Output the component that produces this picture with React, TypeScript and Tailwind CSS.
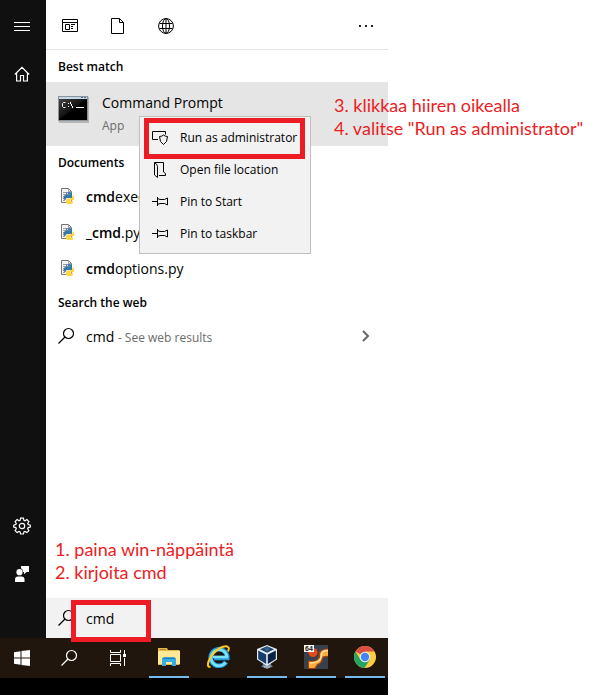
import type { ReactNode } from "react";

const documents = [
  { match: "cmd", after: "exec.py" },
  { match: "_cmd", after: ".py" },
  { match: "cmd", after: "options.py" },
];

const SearchIcon = ({ className = "" }: { className?: string }) => (
  <svg width="18" height="18" viewBox="0 0 18 18" fill="none" stroke="currentColor" className={className}>
    <circle cx="10.5" cy="6.5" r="5" strokeWidth="1.2" />
    <path d="M7 10 .5 16.500" strokeWidth="1.2" />
  </svg>
);

const HomeIcon = () => (
  <svg width="16" height="16" viewBox="0 0 16 16" fill="none" stroke="currentColor" strokeWidth="1.2">
    <path d="M.8 8.500 8 1.400l7.200 7.100M2.600 7v8h3.900V9.500h3v5.500h3.900V7" />
  </svg>
);

const GearIcon = () => (
  <svg width="18" height="18" viewBox="0 0 18 18" fill="none" stroke="currentColor" strokeWidth="1.2">
    <path d="M7.6 1.2h2.8l.5 2.1 1.1.5 1.9-1.2 2 2-1.2 1.9.5 1.1 2.1.5v2l-2.1.5-.5 1.2 1.2 1.8-2 2-1.9-1.2-1.1.5-.5 2.1H7.6l-.5-2.1-1.1-.5-1.9 1.2-2-2 1.2-1.8-.5-1.2L.7 10V8.1l2.1-.5.5-1.1-1.2-1.9 2-2L6 3.8l1.1-.5z" />
    <circle cx="9" cy="9" r="2.7" />
  </svg>
);

const FeedbackIcon = () => (
  <svg width="16" height="18" viewBox="0 0 16 18" fill="currentColor">
    <path d="M7 1h8v6h-2.5L10 9.2V7H9a4 4 0 0 0-2-3.7z" />
    <circle cx="5.5" cy="7.2" r="3.1" />
    <path d="M1 17v-2.5a3 3 0 0 1 3-3h3.5a3 3 0 0 1 3 3V17z" />
  </svg>
);

const AppsIcon = () => (
  <svg width="16" height="16" viewBox="0 0 16 16" fill="none" stroke="currentColor">
    <path d="M.5 1.500h15v12H.5zM.5 4.500h15M3.500 6.500h4v5h-4zM9 6.500h4M9 8.500h2M9 10.500h2" />
  </svg>
);

const FileIcon = () => (
  <svg width="16" height="16" viewBox="0 0 16 16" fill="none" stroke="currentColor">
    <path d="M1.500.5h8l4 4v11h-12zM9.500.5v4h4" />
  </svg>
);

const GlobeIcon = () => (
  <svg width="16" height="16" viewBox="0 0 16 16" fill="none" stroke="currentColor">
    <circle cx="8" cy="8" r="7.400" />
    <ellipse cx="8" cy="8" rx="3.500" ry="7.400" />
    <path d="M8 .5v15M1.500 5.500h13M1.500 10.500h13" />
  </svg>
);

const CmdIcon = () => (
  <svg width="32" height="28" viewBox="0 0 32 28">
    <defs>
      <linearGradient id="screen" x1="0" y1="0" x2="1" y2="1">
        <stop offset="0" stopColor="#444" />
        <stop offset=".48" stopColor="#111" />
        <stop offset=".5" stopColor="#000" />
      </linearGradient>
    </defs>
    <path d="M1 1h30v26H1z" fill="#b5b5b5" />
    <path d="M0 0h30v25H0z" fill="#8b949b" />
    <path d="M1 1h28v2H1z" fill="#c5d8e8" />
    <path d="M23 1h2v1h-2zM26 1h2v1h-2z" fill="#527292" />
    <path d="M1 3h28v21H1z" fill="url(#screen)" />
    <path
      d="M7.500 6.500h-2l-1 1v3l1 1h2M10.500 7v1M10.500 10v1M12.500 6v2M13.500 8v2M14.500 10v2M18 11.500h8"
      fill="none"
      stroke="#fff"
    />
  </svg>
);

const PythonFileIcon = () => (
  <svg width="14" height="16" viewBox="0 0 14 16" className="shrink-0">
    <path d="M.5.5h7l3 3v11H.5z" fill="#f5f5f5" stroke="#777" />
    <path d="M7.500.5v3h3M2 4.500h4M2 6.500h6M2 8.500h3M2 10.500h2M2 12.500h2" fill="none" stroke="#999" />
    <path d="M5 5.500Q5 4 8 4t3 1.500V8q0 2-2 2H6q-1.500 0-1.500 2H4q-1.500 0-1.500-2.500T4.500 7h4v-.6H5z" fill="#3776ab" />
    <path d="M11.500 7q1.800.3 1.800 3T11 12.500H9v.7h3v1.300Q12 16 8.500 16T5 14.500V12.500q0-2 2-2h2.500q2 0 2-2z" fill="#ffd544" />
    <circle cx="6.500" cy="5.500" r=".5" fill="#fff" />
  </svg>
);

const ShieldIcon = () => (
  <svg width="16" height="16" viewBox="0 0 16 16" fill="none" stroke="currentColor">
    <path d="M13.500 4.500v-3H.5v8h5.500M11.500 5q1.500 1.500 4 1.500 0 6-4 8-4-2-4-8 2.500 0 4-1.500z" />
  </svg>
);

const FolderIcon = () => (
  <svg width="16" height="16" viewBox="0 0 16 16" fill="none" stroke="currentColor">
    <path d="M2.500.5h9v9.500l2 1.500v2H7M2.500.5v12.500l3 2.500V4.500q0-2-3-4" />
  </svg>
);

const PinIcon = () => (
  <svg width="16" height="16" viewBox="0 0 16 16" fill="none" stroke="currentColor">
    <path d="M0 7.500h5.500M5.500 3v9M5.500 4.500 8 5.500h4.500l3-1.500v7l-3-1.500H8l-2.500 1" />
  </svg>
);

const WindowsIcon = () => (
  <svg width="16" height="16" viewBox="0 0 16 16" fill="#fff">
    <path d="M0 2.200 6.500 1.300V7.500H0zM7.500 1.100 16 0v7.500H7.500zM0 8.500h6.500v6.200L0 13.800zM7.500 8.500H16V16l-8.500-1.100z" />
  </svg>
);

const TaskViewIcon = () => (
  <svg width="18" height="16" viewBox="0 0 18 16" fill="none" stroke="#fff">
    <path d="M1.500 0v2.500h10V0M1.500 4.500h10v7h-10zM1.500 16v-2.500h10V16M15.500 0v4M15.500 8v8" />
    <path d="M14 4h3v3h-3z" fill="#fff" stroke="none" />
  </svg>
);

const ExplorerIcon = () => (
  <svg width="22" height="20" viewBox="0 0 22 20">
    <path d="M0 1h9l1 2h11.500v15H0z" fill="#e5b94e" />
    <path d="M2 2h6v1H2z" fill="#b58a32" />
    <path d="M0 4h22v13H0z" fill="#ffe896" />
    <path d="M4 19v-7l1.500-1.500h11L18 12v7h-4v-4H8v4z" fill="#35aee8" />
    <path d="M5.500 10.500h11L18 12H4z" fill="#1979c9" />
  </svg>
);

const InternetExplorerIcon = () => (
  <svg width="24" height="24" viewBox="0 0 24 24" fill="none">
    <path d="M20 17a8.300 8.300 0 1 1 1.300-4H8" stroke="#209ce0" strokeWidth="4.600" />
    <path d="M19.500 17.500a8 8 0 1 1 1.500-5.500H7" stroke="#7ce2fc" strokeWidth="2.600" />
    <path d="M4.500 21.500C1 23 1 18 5 11.500 10 4 18.500-.5 22 2c1.500 1 .7 3 0 4.500" stroke="#ffc91f" strokeWidth="2" />
  </svg>
);

const VirtualBoxIcon = () => (
  <svg width="20" height="24" viewBox="0 0 20 24">
    <path d="M6 17h8v3l2 1.500L10 24l-6-2.500L6 20z" fill="#76879b" />
    <path d="M10 0 20 4v10.500L10 21 0 14.500V4z" fill="#e5edf4" />
    <path d="m10 1.200 7 3-7 3.600-7-3.600z" fill="#1d3e67" />
    <path d="M1.200 5.500 9.200 9.500v9.500L1.200 14z" fill="#173c6d" />
    <path d="M18.800 5.500 10.800 9.500v9.500l8-5z" fill="#0b2345" />
    <path d="m10 1.500 3 2.500-3 2.500L7 4z" fill="#3b6290" />
    <path d="M7 22h6" stroke="#c6d0db" />
  </svg>
);

const SixtyFourIcon = () => (
  <svg width="24" height="24" viewBox="0 0 24 24">
    <path d="M0 0h24v24H0z" fill="#38404b" />
    <circle cx="9" cy="7.500" r="4.500" fill="#e84a16" />
    <path d="M24 3.500v8.500q-5-.5-5.500 3T14 20l-2.500 4H4v-8.500q6 1 8.500-1t2-6Q16 3.500 24 3.500z" fill="#9b430f" />
    <path d="M24 4.500v6.500q-6-1-6.500 3T13 19l-2.500 4H5v-6.500q6 1 9-1.500t2-6Q17 4.500 24 4.500z" fill="#ffad42" />
    <path d="M24 5.500q-6 0-6.500 3.500 0 5-3 7T6 18" fill="none" stroke="#ffe3a6" strokeWidth="1.500" />
    <path d="M0 0h10v7H0z" fill="#fff" />
    <text x="1" y="6" fontSize="7" fontWeight="700" fontFamily="Liberation Sans, sans-serif" fill="#111">
      64
    </text>
  </svg>
);

const ChromeIcon = () => (
  <svg width="22" height="22" viewBox="0 0 22 22">
    <circle cx="11" cy="11" r="11" fill="#ffcd42" />
    <path d="M11 11 1.500 5.500A11 11 0 0 1 20.500 5.500H11z" fill="#d94f43" />
    <path d="M1.500 5.500a11 11 0 0 0 9 16.500L16 13.500 11 11 6.300 13.500z" fill="#24a363" />
    <circle cx="11" cy="11" r="5.200" fill="#f4f4f4" />
    <circle cx="11" cy="11" r="4.200" fill="#4285f4" />
  </svg>
);

const menuItems = [
  { label: "Run as administrator", icon: <ShieldIcon /> },
  { label: "Open file location", icon: <FolderIcon /> },
  { label: "Pin to Start", icon: <PinIcon /> },
  { label: "Pin to taskbar", icon: <PinIcon /> },
];

const taskbarApps = [
  { label: "File Explorer", icon: <ExplorerIcon />, running: true },
  { label: "Internet Explorer", icon: <InternetExplorerIcon />, running: false },
  { label: "VirtualBox", icon: <VirtualBoxIcon />, running: true },
  { label: "Editor", icon: <SixtyFourIcon />, running: true },
  { label: "Chrome", icon: <ChromeIcon />, running: true },
];

const RailButton = ({ label, children }: { label: string; children: ReactNode }) => (
  <button aria-label={label} className="flex h-12 w-11 items-center justify-center text-white">
    {children}
  </button>
);

const SectionTitle = ({ children }: { children: ReactNode }) => (
  <h2 className="flex h-8 items-center px-3 pt-0.5 text-[12px] font-semibold">{children}</h2>
);

const App = () => {
  return (
    <div className="min-h-screen bg-white pb-px pr-[221px] font-['Open_Sans',sans-serif] text-black">
      <div className="flex min-h-[calc(100vh-1px)] flex-col">
        <div className="flex flex-1">
          {/* Left rail */}
          <nav className="flex w-[46px] shrink-0 flex-col bg-[#101010] pb-10 pt-0.5">
            <RailButton label="Menu">
              <svg width="16" height="10" viewBox="0 0 16 10" stroke="currentColor">
                <path d="M0 1.500h16M0 5.500h16M0 9.500h16" />
              </svg>
            </RailButton>
            <RailButton label="Home">
              <HomeIcon />
            </RailButton>
            <div className="flex-1" />
            <RailButton label="Settings">
              <GearIcon />
            </RailButton>
            <RailButton label="Feedback">
              <FeedbackIcon />
            </RailButton>
          </nav>

          {/* Search results */}
          <main className="relative flex min-w-0 flex-1 flex-col">
            <header className="flex h-[50px] items-center border-b border-[#e5e5e5] pl-4 pr-[14px] pt-0.5">
              <button aria-label="Apps" className="w-12">
                <AppsIcon />
              </button>
              <button aria-label="Documents" className="w-12">
                <FileIcon />
              </button>
              <button aria-label="Web">
                <GlobeIcon />
              </button>
              <button aria-label="More" className="ml-auto">
                <svg width="16" height="4" viewBox="0 0 16 4" fill="#222">
                  <path d="M1 1h2v2H1zM7 1h2v2H7zM13 1h2v2h-2z" />
                </svg>
              </button>
            </header>

            <SectionTitle>Best match</SectionTitle>
            <section className="relative flex h-16 gap-3 bg-[#e5e5e5] px-3">
              <div className="pt-[14px]">
                <CmdIcon />
              </div>
              <div className="pt-2.5">
                <p className="text-[14px] leading-[22px]">Command Prompt</p>
                <p className="pt-0.5 text-[12px] leading-5 text-[#6b6b6b]">App</p>
              </div>

              {/* Context menu */}
              <div className="absolute left-[93px] top-[34px] z-10 w-[172px] border border-[#bfbfbf] bg-[#f2f2f2] py-1">
                {menuItems.map((item) => (
                  <button
                    key={item.label}
                    className="flex h-8 w-full items-center gap-3 whitespace-nowrap pl-3 pt-0.5 text-[12px]"
                  >
                    {item.icon}
                    {item.label}
                  </button>
                ))}
                <div className="pointer-events-none absolute left-1 top-px h-[41px] w-[161px] border-[5px] border-[#ed1c24]" />
              </div>

              <div className="absolute left-[288px] top-3 whitespace-nowrap font-['Lato',sans-serif] text-[18px] leading-[23px] text-[#ed1c24]">
                <p>3. klikkaa hiiren oikealla</p>
                <p>4. valitse "Run as administrator"</p>
              </div>
            </section>

            <SectionTitle>Documents</SectionTitle>
            <ul>
              {documents.map((doc) => (
                <li key={doc.match + doc.after}>
                  <button className="flex h-9 w-full items-center pl-[15px] text-[14px]">
                    <PythonFileIcon />
                    <span className="pl-[11px]">
                      <b className="font-semibold">{doc.match}</b>
                      {doc.after}
                    </span>
                  </button>
                </li>
              ))}
            </ul>

            <SectionTitle>Search the web</SectionTitle>
            <button className="flex h-9 w-full items-center pl-3 pr-[17px] text-[14px]">
              <SearchIcon />
              <span className="pl-2.5">
                cmd <span className="text-[12px] text-[#6b6b6b]">- See web results</span>
              </span>
              <svg width="10" height="14" viewBox="0 0 10 14" fill="none" stroke="#666" strokeWidth="2" className="ml-auto">
                <path d="m2 2 5 5-5 5" />
              </svg>
            </button>

            <div className="flex-1" />

            <div className="relative">
              <div className="absolute bottom-[54px] left-[9px] whitespace-nowrap font-['Lato',sans-serif] text-[18px] leading-[23px] text-[#ed1c24]">
                <p>1. paina win-näppäintä</p>
                <p>2. kirjoita cmd</p>
              </div>
              <label className="flex h-10 items-center bg-[#f2f2f2] pl-3">
                <SearchIcon className="shrink-0" />
                <input
                  type="text"
                  aria-label="Search"
                  defaultValue="cmd"
                  className="w-full min-w-0 bg-transparent pl-2.5 text-[14px] outline-none"
                />
              </label>
              <div className="pointer-events-none absolute left-[25px] top-0.5 z-10 h-[42px] w-20 border-[5px] border-[#ed1c24]" />
            </div>
          </main>
        </div>

        {/* Taskbar */}
        <footer className="border-b-[17px] border-black bg-[#20160d] text-white">
          <div className="flex h-10">
            <button aria-label="Start" className="flex w-[46px] items-center justify-center pr-0.5">
              <WindowsIcon />
            </button>
            <button aria-label="Search" className="flex w-12 items-center justify-center">
              <SearchIcon />
            </button>
            <button aria-label="Task view" className="flex w-12 items-center justify-center">
              <TaskViewIcon />
            </button>
            <div className="flex gap-[9px] pl-[7px]">
              {taskbarApps.map((app) => (
                <button
                  key={app.label}
                  aria-label={app.label}
                  className={
                    app.running
                      ? "flex w-10 items-center justify-center border-b-2 border-[#76b9ed]"
                      : "flex w-10 items-center justify-center border-b-2 border-transparent"
                  }
                >
                  {app.icon}
                </button>
              ))}
            </div>
          </div>
        </footer>
      </div>
    </div>
  );
};

export default App;
